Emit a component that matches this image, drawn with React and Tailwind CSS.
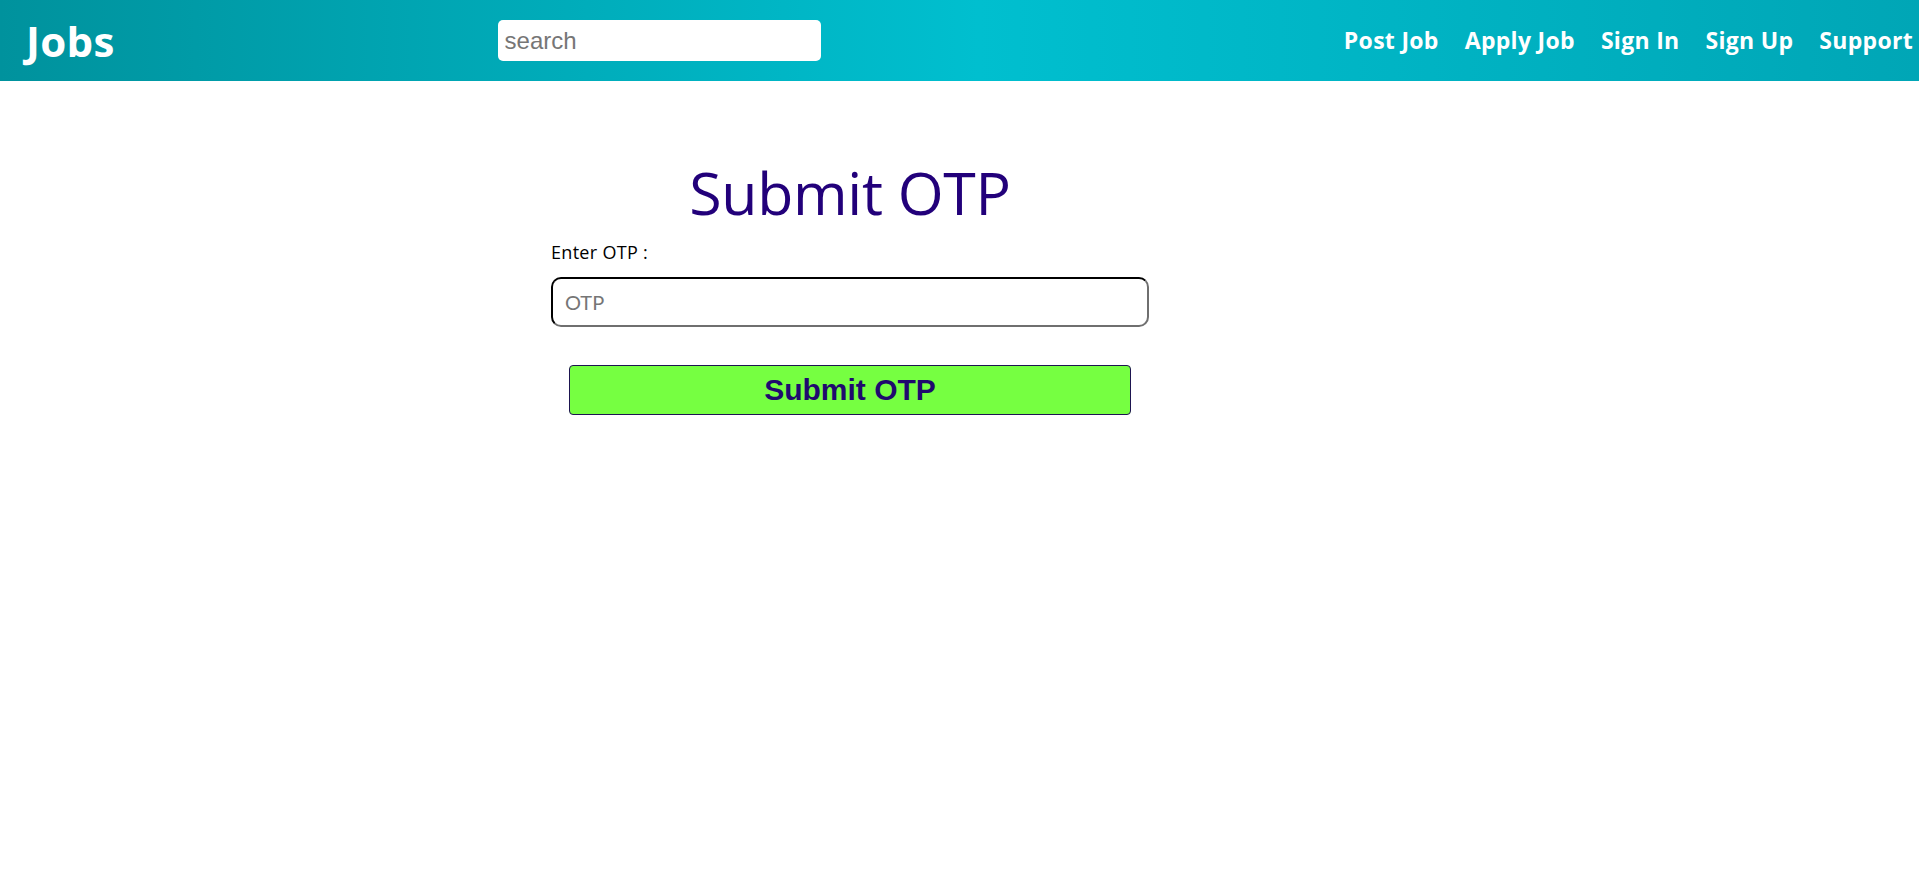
import React from 'react';

const links = ['Post Job', 'Apply Job', 'Sign In', 'Sign Up', 'Support'];

function Header() {
  return (
    <header className="h-[81px] flex items-center pl-[26px] pr-[6px] bg-[linear-gradient(to_right,#00929d_0%,#00bfcf_51%,#00a6b6_100%)] font-['Open_Sans',sans-serif]">
      <div className="text-white font-bold text-[42px] leading-none tracking-[0.3px]">Jobs</div>
      <input
        type="text"
        placeholder="search"
        className="ml-[383px] w-[323px] h-[41px] rounded-[5px] bg-white px-[7px] text-[24px] font-['Liberation_Sans',Arial,sans-serif] placeholder:text-[#767676] outline-none"
      />
      <nav className="ml-auto flex items-center gap-[26px]">
        {links.map((l) => (
          <a key={l} href="#" className="text-white font-bold text-[23px] tracking-[0.3px] leading-none">
            {l}
          </a>
        ))}
      </nav>
    </header>
  );
}

export default function App() {
  return (
    <div className="min-h-[876px] bg-white">
      <Header />
      <main className="w-[1700px] flex justify-center pt-[70px] font-['Open_Sans',sans-serif]">
        <form className="w-[598px] flex flex-col" onSubmit={(e) => e.preventDefault()}>
          <h1 className="text-center text-[59px] text-[#22007a] font-normal leading-[82px] tracking-[-0.3px]">Submit OTP</h1>
          <label className="mt-[8px] text-[18px] leading-[23px] tracking-[0.3px] text-black">Enter OTP :</label>
          <input
            type="text"
            placeholder="OTP"
            className="mt-[13px] h-[50px] rounded-[10px] border-2 [border-style:inset] border-t-[#111] border-l-[#111] border-r-[#6f6f6f] border-b-[#6f6f6f] px-[12px] text-[20px] font-['Lato',sans-serif] placeholder:text-[#767676] outline-none"
          />
          <button
            type="submit"
            className="mt-[38px] mx-[18px] h-[50px] rounded-[4px] border border-[#1d1450] bg-[#76ff41] text-[30px] font-bold text-[#1f0a6e] font-['Liberation_Sans',Arial,sans-serif] leading-none"
          >
            Submit OTP
          </button>
        </form>
      </main>
    </div>
  );
}
